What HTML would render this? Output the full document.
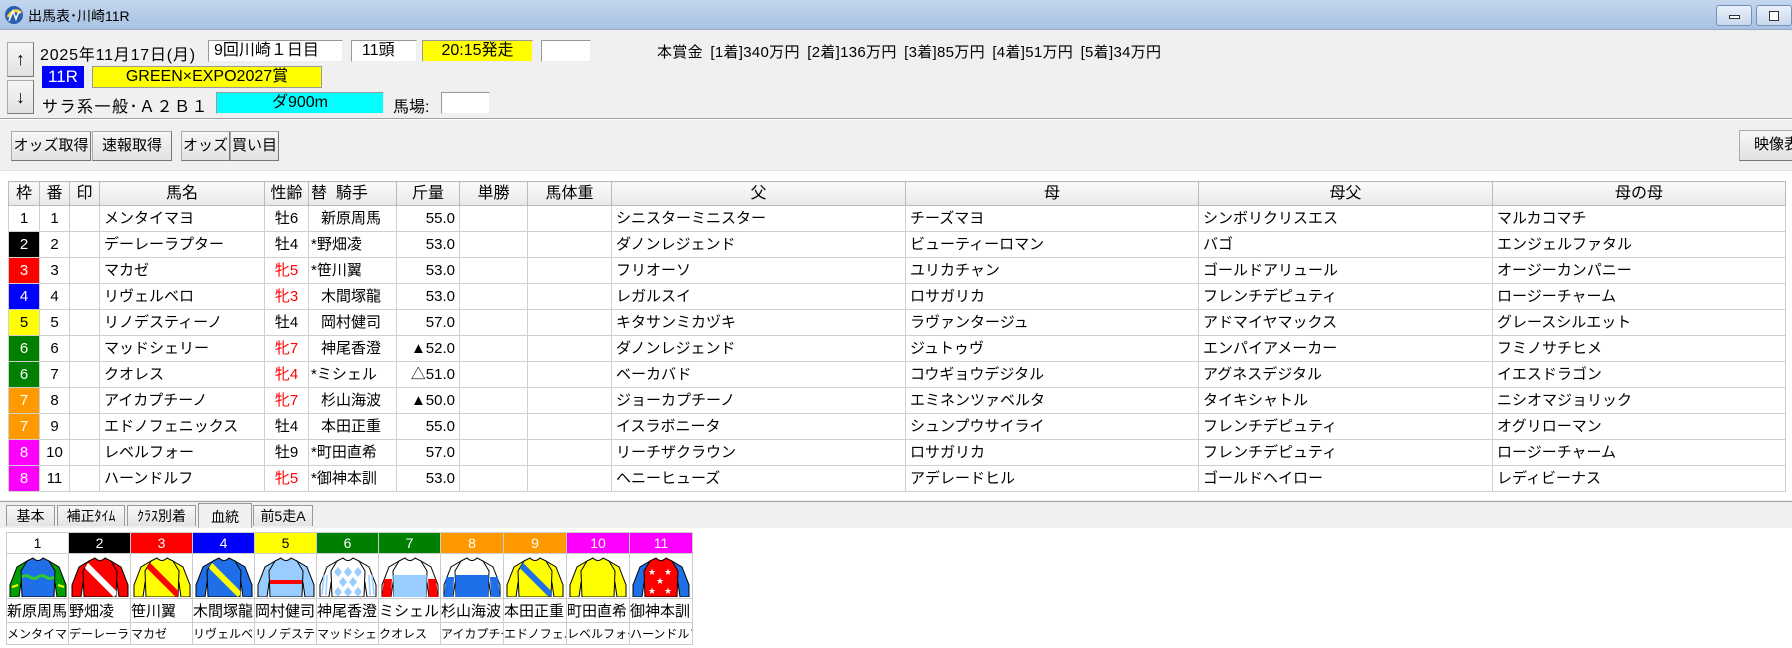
<!DOCTYPE html>
<html><head><meta charset="utf-8">
<style>
*{margin:0;padding:0;box-sizing:border-box}
body{width:1792px;height:648px;overflow:hidden;background:#f0f0f0;font-family:"Liberation Sans","Noto Sans CJK JP",sans-serif;font-size:15px;color:#000;position:relative}
.a{position:absolute}
.title{left:0;top:0;width:1792px;height:30px;background:linear-gradient(#c3d6ee,#a8c3e3);border-bottom:1px solid #9ab}
.box{position:absolute;background:#fff;border:1px solid #999;border-right-color:#eee;border-bottom-color:#eee;height:22px;line-height:20px;font-size:16px;white-space:nowrap}
.btn{position:absolute;background:linear-gradient(#f6f6f6,#e2e2e2);border:1px solid #aaa;border-right-color:#777;border-bottom-color:#777;font-size:15px;text-align:center;line-height:28px;white-space:nowrap;overflow:hidden}
table{border-collapse:collapse;table-layout:fixed}
#t td{height:26px;border:1px solid #cfcfcf;font-size:15px;white-space:nowrap;overflow:hidden;padding:0 4px;line-height:24px}
#t th{height:24px;border:1px solid #bbb;font-weight:normal;font-size:16px;line-height:22px;background:linear-gradient(#fafafa,#e9e9e9);white-space:nowrap;overflow:hidden}
.c{text-align:center}.r{text-align:right}
.red{color:#f00}
#j td{border:1px solid #ccc;text-align:center;font-size:14px;white-space:nowrap;overflow:hidden;padding:0}
#j td svg{display:block;margin:0 auto}
.tab{position:absolute;top:505px;height:21px;background:linear-gradient(#f8f8f8,#e4e4e4);border:1px solid #999;border-bottom:none;font-size:14px;line-height:20px;text-align:center}
</style></head><body>
<div class="a title"></div>
<svg class="a" style="left:4px;top:5px" width="20" height="20" viewBox="0 0 20 20"><circle cx="10" cy="10" r="9" fill="#2a5fb0"/><path d="M4 12 Q10 2 17 8" stroke="#f6d23a" stroke-width="3" fill="none"/><path d="M5 16 L9 6 L12 14 L15 6" stroke="#fff" stroke-width="1.5" fill="none"/></svg>
<div class="a" style="left:28px;top:6px;font-size:14px">出馬表･川崎11R</div>
<div class="a" style="left:1716px;top:5px;width:36px;height:21px;border:1px solid #7790b8;border-radius:3px;background:linear-gradient(#eaf1fb,#c9d8ee)"><div class="a" style="left:12px;top:9px;width:11px;height:4px;border:1px solid #333;background:#fff"></div></div>
<div class="a" style="left:1756px;top:5px;width:36px;height:21px;border:1px solid #7790b8;border-radius:3px;background:linear-gradient(#eaf1fb,#c9d8ee)"><div class="a" style="left:12px;top:5px;width:10px;height:10px;border:1px solid #333;background:#fff"></div></div>

<div class="btn" style="left:7px;top:42px;width:27px;height:35px;line-height:33px;font-size:18px">↑</div>
<div class="btn" style="left:7px;top:80px;width:27px;height:34px;line-height:32px;font-size:18px">↓</div>
<div class="a" style="left:40px;top:41px;font-size:16px;letter-spacing:0.8px">2025年11月17日(月)</div>
<div class="box" style="left:208px;top:40px;width:135px;padding-left:5px">9回川崎１日目</div>
<div class="box" style="left:351px;top:40px;width:66px;padding-left:10px">11頭</div>
<div class="box" style="left:422px;top:40px;width:111px;background:#ffff00;text-align:center">20:15発走</div>
<div class="box" style="left:541px;top:40px;width:50px"></div>
<div class="a" style="left:657px;top:41px;font-size:15px;word-spacing:3px;letter-spacing:0.3px">本賞金 [1着]340万円 [2着]136万円 [3着]85万円 [4着]51万円 [5着]34万円</div>
<div class="a" style="left:42px;top:66px;width:42px;height:22px;background:#0000ff;color:#fff;font-size:17px;line-height:22px;text-align:center">11R</div>
<div class="box" style="left:92px;top:66px;width:230px;background:#ffff00;text-align:center;border-color:#999;font-size:16px">GREEN×EXPO2027賞</div>
<div class="a" style="left:42px;top:93px;font-size:16px;letter-spacing:1.5px">サラ系一般･Ａ２Ｂ１</div>
<div class="box" style="left:216px;top:92px;width:168px;background:#00ffff;text-align:center">ダ900m</div>
<div class="a" style="left:393px;top:93px;font-size:16px">馬場:</div>
<div class="box" style="left:441px;top:92px;width:49px"></div>
<div class="a" style="left:0;top:118px;width:1792px;height:2px;background:#a0a0a0;border-bottom:1px solid #fff"></div>

<div class="btn" style="left:11px;top:131px;width:80px;height:30px">オッズ取得</div>
<div class="btn" style="left:92px;top:131px;width:80px;height:30px">速報取得</div>
<div class="btn" style="left:181px;top:131px;width:49px;height:30px">オッズ</div>
<div class="btn" style="left:230px;top:131px;width:49px;height:30px">買い目</div>
<div class="btn" style="left:1739px;top:130px;width:60px;height:31px;text-align:left;padding-left:14px">映像表示</div>

<div class="a" style="left:0;top:170px;width:1792px;height:330px;background:#fff;border-top:1px solid #ddd"></div>
<table id="t" class="a" style="left:8px;top:181px;width:1777px;background:#fff;border:1px solid #8fa8c8">
<colgroup><col style="width:31px"><col style="width:30px"><col style="width:30px"><col style="width:165px"><col style="width:44px"><col style="width:88px"><col style="width:63px"><col style="width:68px"><col style="width:84px"><col style="width:294px"><col style="width:293px"><col style="width:294px"><col style="width:293px"></colgroup>
<tr><th>枠</th><th>番</th><th>印</th><th>馬名</th><th>性齢</th><th style="text-align:left;padding-left:2px">替&nbsp;&nbsp;騎手</th><th>斤量</th><th>単勝</th><th>馬体重</th><th>父</th><th>母</th><th>母父</th><th>母の母</th></tr>
<tr><td class="c" style="background:#fff">1</td><td class="c">1</td><td></td><td>メンタイマヨ</td><td class="c">牡6</td><td style="padding-left:12px">新原周馬</td><td class="r">55.0</td><td></td><td></td><td>シニスターミニスター</td><td>チーズマヨ</td><td>シンボリクリスエス</td><td>マルカコマチ</td></tr>
<tr><td class="c" style="background:#000;color:#fff">2</td><td class="c">2</td><td></td><td>デーレーラプター</td><td class="c">牡4</td><td style="padding-left:2px">*野畑凌</td><td class="r">53.0</td><td></td><td></td><td>ダノンレジェンド</td><td>ビューティーロマン</td><td>バゴ</td><td>エンジェルファタル</td></tr>
<tr><td class="c" style="background:#f00;color:#fff">3</td><td class="c">3</td><td></td><td>マカゼ</td><td class="c red">牝5</td><td style="padding-left:2px">*笹川翼</td><td class="r">53.0</td><td></td><td></td><td>フリオーソ</td><td>ユリカチャン</td><td>ゴールドアリュール</td><td>オージーカンパニー</td></tr>
<tr><td class="c" style="background:#00f;color:#fff">4</td><td class="c">4</td><td></td><td>リヴェルベロ</td><td class="c red">牝3</td><td style="padding-left:12px">木間塚龍</td><td class="r">53.0</td><td></td><td></td><td>レガルスイ</td><td>ロサガリカ</td><td>フレンチデピュティ</td><td>ロージーチャーム</td></tr>
<tr><td class="c" style="background:#ff0">5</td><td class="c">5</td><td></td><td>リノデスティーノ</td><td class="c">牡4</td><td style="padding-left:12px">岡村健司</td><td class="r">57.0</td><td></td><td></td><td>キタサンミカヅキ</td><td>ラヴァンタージュ</td><td>アドマイヤマックス</td><td>グレースシルエット</td></tr>
<tr><td class="c" style="background:#008000;color:#fff">6</td><td class="c">6</td><td></td><td>マッドシェリー</td><td class="c red">牝7</td><td style="padding-left:12px">神尾香澄</td><td class="r">▲52.0</td><td></td><td></td><td>ダノンレジェンド</td><td>ジュトゥヴ</td><td>エンパイアメーカー</td><td>フミノサチヒメ</td></tr>
<tr><td class="c" style="background:#008000;color:#fff">6</td><td class="c">7</td><td></td><td>クオレス</td><td class="c red">牝4</td><td style="padding-left:2px">*ミシェル</td><td class="r">△51.0</td><td></td><td></td><td>ベーカバド</td><td>コウギョウデジタル</td><td>アグネスデジタル</td><td>イエスドラゴン</td></tr>
<tr><td class="c" style="background:#ff9900;color:#fff">7</td><td class="c">8</td><td></td><td>アイカプチーノ</td><td class="c red">牝7</td><td style="padding-left:12px">杉山海波</td><td class="r">▲50.0</td><td></td><td></td><td>ジョーカプチーノ</td><td>エミネンツァベルタ</td><td>タイキシャトル</td><td>ニシオマジョリック</td></tr>
<tr><td class="c" style="background:#ff9900;color:#fff">7</td><td class="c">9</td><td></td><td>エドノフェニックス</td><td class="c">牡4</td><td style="padding-left:12px">本田正重</td><td class="r">55.0</td><td></td><td></td><td>イスラボニータ</td><td>シュンプウサイライ</td><td>フレンチデピュティ</td><td>オグリローマン</td></tr>
<tr><td class="c" style="background:#f0f;color:#fff">8</td><td class="c">10</td><td></td><td>レベルフォー</td><td class="c">牡9</td><td style="padding-left:2px">*町田直希</td><td class="r">57.0</td><td></td><td></td><td>リーチザクラウン</td><td>ロサガリカ</td><td>フレンチデピュティ</td><td>ロージーチャーム</td></tr>
<tr><td class="c" style="background:#f0f;color:#fff">8</td><td class="c">11</td><td></td><td>ハーンドルフ</td><td class="c red">牝5</td><td style="padding-left:2px">*御神本訓</td><td class="r">53.0</td><td></td><td></td><td>ヘニーヒューズ</td><td>アデレードヒル</td><td>ゴールドヘイロー</td><td>レディビーナス</td></tr>
</table>
<div class="a" style="left:0;top:501px;width:1792px;height:1px;background:#a0a0a0"></div>

<div class="tab" style="left:6px;width:49px">基本</div>
<div class="tab" style="left:57px;width:68px">補正ﾀｲﾑ</div>
<div class="tab" style="left:127px;width:69px">ｸﾗｽ別着</div>
<div class="tab" style="left:198px;top:503px;height:25px;width:54px;background:#f0f0f0;line-height:26px">血統</div>
<div class="tab" style="left:253px;width:60px">前5走A</div>
<div class="a" style="left:0;top:528px;width:1792px;height:120px;background:#fff"></div>

<svg width="0" height="0" style="position:absolute">
<defs>
<clipPath id="bc"><path d="M19 6 L25 3 Q30 8 35 3 L41 6 L47 16 L46 42 L14 42 L13 16 Z"/></clipPath>
</defs></svg>

<table id="j" class="a" style="left:6px;top:532px;width:686px;border:1px solid #aaa">
<colgroup><col style="width:62px"><col style="width:62px"><col style="width:62px"><col style="width:62px"><col style="width:62px"><col style="width:62px"><col style="width:62px"><col style="width:63px"><col style="width:63px"><col style="width:63px"><col style="width:63px"></colgroup>
<tr style="height:21px">
<td style="background:#fff">1</td><td style="background:#000;color:#fff">2</td><td style="background:#f00;color:#fff">3</td><td style="background:#00f;color:#fff">4</td><td style="background:#ff0">5</td><td style="background:#008000;color:#fff">6</td><td style="background:#008000;color:#fff">7</td><td style="background:#ff9900;color:#fff">8</td><td style="background:#ff9900;color:#fff">9</td><td style="background:#f0f;color:#fff">10</td><td style="background:#f0f;color:#fff">11</td></tr>
<tr style="height:45px">
<td><svg width="60" height="42" viewBox="0 0 60 42"><path d="M19 6 L9 12 L2 30 L2 42 L11 42 L13 28 Z M41 6 L51 12 L58 30 L58 42 L49 42 L47 28 Z" fill="#00a000" stroke="#000"/><path d="M4 32 L10 30 M50 30 L56 32" stroke="#ff0" stroke-width="2"/><path d="M19 6 L25 3 Q30 8 35 3 L41 6 L47 16 L46 42 L14 42 L13 16 Z" fill="#1e6fe8" stroke="#000"/><path d="M14 22 Q18 19 22 22 T30 22 T38 22 T46 22" stroke="#2ecc2e" stroke-width="3" fill="none"/></svg></td>
<td><svg width="60" height="42" viewBox="0 0 60 42"><path d="M19 6 L9 12 L2 30 L2 42 L11 42 L13 28 Z M41 6 L51 12 L58 30 L58 42 L49 42 L47 28 Z" fill="#f00" stroke="#000"/><path d="M19 6 L25 3 Q30 8 35 3 L41 6 L47 16 L46 42 L14 42 L13 16 Z" fill="#f00" stroke="#000"/><path d="M14 8 L46 40" stroke="#fff" stroke-width="6" clip-path="url(#bc)"/></svg></td>
<td><svg width="60" height="42" viewBox="0 0 60 42"><path d="M19 6 L9 12 L2 30 L2 42 L11 42 L13 28 Z M41 6 L51 12 L58 30 L58 42 L49 42 L47 28 Z" fill="#ff0" stroke="#000"/><path d="M19 6 L25 3 Q30 8 35 3 L41 6 L47 16 L46 42 L14 42 L13 16 Z" fill="#ff0" stroke="#000"/><path d="M14 8 L46 40" stroke="#f00" stroke-width="6" clip-path="url(#bc)"/></svg></td>
<td><svg width="60" height="42" viewBox="0 0 60 42"><path d="M19 6 L9 12 L2 30 L2 42 L11 42 L13 28 Z M41 6 L51 12 L58 30 L58 42 L49 42 L47 28 Z" fill="#1e6fe8" stroke="#000"/><path d="M19 6 L25 3 Q30 8 35 3 L41 6 L47 16 L46 42 L14 42 L13 16 Z" fill="#1e6fe8" stroke="#000"/><path d="M14 8 L46 40" stroke="#ff0" stroke-width="6" clip-path="url(#bc)"/></svg></td>
<td><svg width="60" height="42" viewBox="0 0 60 42"><path d="M19 6 L9 12 L2 30 L2 42 L11 42 L13 28 Z M41 6 L51 12 L58 30 L58 42 L49 42 L47 28 Z" fill="#99ccff" stroke="#000"/><path d="M19 6 L25 3 Q30 8 35 3 L41 6 L47 16 L46 42 L14 42 L13 16 Z" fill="#99ccff" stroke="#000"/><rect x="14" y="25" width="32" height="4" fill="#f00"/></svg></td>
<td><svg width="60" height="42" viewBox="0 0 60 42"><path d="M19 6 L9 12 L2 30 L2 42 L11 42 L13 28 Z M41 6 L51 12 L58 30 L58 42 L49 42 L47 28 Z" fill="#fff" stroke="#000"/><path d="M6 20 L4 40 M9 20 L8 40 M54 20 L56 40 M51 20 L52 40" stroke="#99ccff" stroke-width="1.5"/><path d="M19 6 L25 3 Q30 8 35 3 L41 6 L47 16 L46 42 L14 42 L13 16 Z" fill="#fff" stroke="#000"/><g fill="#99ccff" clip-path="url(#bc)"><path d="M20 12 l4 5 l-4 5 l-4 -5z M30 12 l4 5 l-4 5 l-4 -5z M40 12 l4 5 l-4 5 l-4 -5z M25 22 l4 5 l-4 5 l-4 -5z M35 22 l4 5 l-4 5 l-4 -5z M20 32 l4 5 l-4 5 l-4 -5z M30 32 l4 5 l-4 5 l-4 -5z M40 32 l4 5 l-4 5 l-4 -5z"/></g></svg></td>
<td><svg width="60" height="42" viewBox="0 0 60 42"><path d="M19 6 L9 12 L2 30 L2 42 L11 42 L13 28 Z M41 6 L51 12 L58 30 L58 42 L49 42 L47 28 Z" fill="#fff" stroke="#000"/><path d="M4 24 L12 24 L11 42 L2 42 Z M48 24 L56 24 L58 42 L49 42 Z" fill="#f00"/><path d="M19 6 L25 3 Q30 8 35 3 L41 6 L47 16 L46 42 L14 42 L13 16 Z" fill="#fff" stroke="#000"/><rect x="13" y="20" width="34" height="22" fill="#99ccff" clip-path="url(#bc)"/></svg></td>
<td><svg width="60" height="42" viewBox="0 0 60 42"><path d="M19 6 L9 12 L2 30 L2 42 L11 42 L13 28 Z M41 6 L51 12 L58 30 L58 42 L49 42 L47 28 Z" fill="#fff" stroke="#000"/><path d="M4 22 L12 22 L11 42 L2 42 Z M48 22 L56 22 L58 42 L49 42 Z" fill="#1e6fe8"/><path d="M19 6 L25 3 Q30 8 35 3 L41 6 L47 16 L46 42 L14 42 L13 16 Z" fill="#fff" stroke="#000"/><rect x="13" y="20" width="34" height="22" fill="#1e6fe8" clip-path="url(#bc)"/></svg></td>
<td><svg width="60" height="42" viewBox="0 0 60 42"><path d="M19 6 L9 12 L2 30 L2 42 L11 42 L13 28 Z M41 6 L51 12 L58 30 L58 42 L49 42 L47 28 Z" fill="#ff0" stroke="#000"/><path d="M19 6 L25 3 Q30 8 35 3 L41 6 L47 16 L46 42 L14 42 L13 16 Z" fill="#ff0" stroke="#000"/><path d="M14 8 L46 40" stroke="#1e6fe8" stroke-width="6" clip-path="url(#bc)"/></svg></td>
<td><svg width="60" height="42" viewBox="0 0 60 42"><path d="M19 6 L9 12 L2 30 L2 42 L11 42 L13 28 Z M41 6 L51 12 L58 30 L58 42 L49 42 L47 28 Z" fill="#ff0" stroke="#000"/><path d="M19 6 L25 3 Q30 8 35 3 L41 6 L47 16 L46 42 L14 42 L13 16 Z" fill="#ff0" stroke="#000"/></svg></td>
<td><svg width="60" height="42" viewBox="0 0 60 42"><path d="M19 6 L9 12 L2 30 L2 42 L11 42 L13 28 Z M41 6 L51 12 L58 30 L58 42 L49 42 L47 28 Z" fill="#1e6fe8" stroke="#000"/><path d="M19 6 L25 3 Q30 8 35 3 L41 6 L47 16 L46 42 L14 42 L13 16 Z" fill="#f00" stroke="#000"/><g fill="#fff" font-size="9" font-family="DejaVu Sans"><text x="17" y="20">★</text><text x="33" y="20">★</text><text x="25" y="29">★</text><text x="17" y="39">★</text><text x="33" y="39">★</text></g></svg></td>
</tr>
<tr style="height:24px"><td style="text-align:left;font-size:15px">新原周馬</td><td style="text-align:left;font-size:15px">野畑凌</td><td style="text-align:left;font-size:15px">笹川翼</td><td style="text-align:left;font-size:15px">木間塚龍</td><td style="text-align:left;font-size:15px">岡村健司</td><td style="text-align:left;font-size:15px">神尾香澄</td><td style="text-align:left;font-size:15px">ミシェル</td><td style="text-align:left;font-size:15px">杉山海波</td><td style="text-align:left;font-size:15px">本田正重</td><td style="text-align:left;font-size:15px">町田直希</td><td style="text-align:left;font-size:15px">御神本訓</td></tr>
<tr style="height:22px"><td style="text-align:left;font-size:12px">メンタイマヨ</td><td style="text-align:left;font-size:12px">デーレーラプター</td><td style="text-align:left;font-size:12px">マカゼ</td><td style="text-align:left;font-size:12px">リヴェルベロ</td><td style="text-align:left;font-size:12px">リノデスティーノ</td><td style="text-align:left;font-size:12px">マッドシェリー</td><td style="text-align:left;font-size:12px">クオレス</td><td style="text-align:left;font-size:12px">アイカプチーノ</td><td style="text-align:left;font-size:12px">エドノフェニックス</td><td style="text-align:left;font-size:12px">レベルフォー</td><td style="text-align:left;font-size:12px">ハーンドルフ</td></tr>
</table>
</body></html>
